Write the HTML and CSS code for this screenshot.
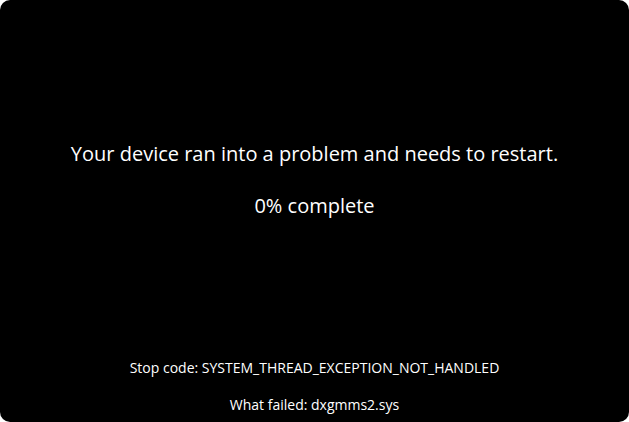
FILE: index.html
```html
<!DOCTYPE html>
<html lang="en">
<head>
    <meta charset="UTF-8">
    <title>Restart</title>
    <link rel="stylesheet" href="styles.css">
</head>
<body>
    <div class="screen">
        <div class="message">
            <p class="headline">Your device ran into a problem and needs to restart.</p>
            <p class="progress">0% complete</p>
        </div>
        <div class="details">
            <p>Stop code: SYSTEM_THREAD_EXCEPTION_NOT_HANDLED</p>
            <p>What failed: dxgmms2.sys</p>
        </div>
    </div>
</body>
</html>
```

FILE: styles.css
```css
html, body {
    margin: 0;
    background-color: #fff;
}
.screen {
    width: 629px;
    height: 422px;
    background-color: #000;
    border-radius: 10px;
    color: #fff;
    font-family: "Open Sans", "Noto Sans", sans-serif;
    text-align: center;
    display: flex;
    flex-direction: column;
    box-sizing: border-box;
    padding-top: 140px;
}
.message p {
    margin: 0;
    font-size: 20px;
    line-height: 28px;
}
.message .progress {
    margin-top: 24px;
}
.details {
    margin-top: auto;
    padding-bottom: 7px;
}
.details p {
    margin: 0;
    font-size: 14px;
    line-height: 20px;
}
.details p + p {
    margin-top: 17px;
}
```
